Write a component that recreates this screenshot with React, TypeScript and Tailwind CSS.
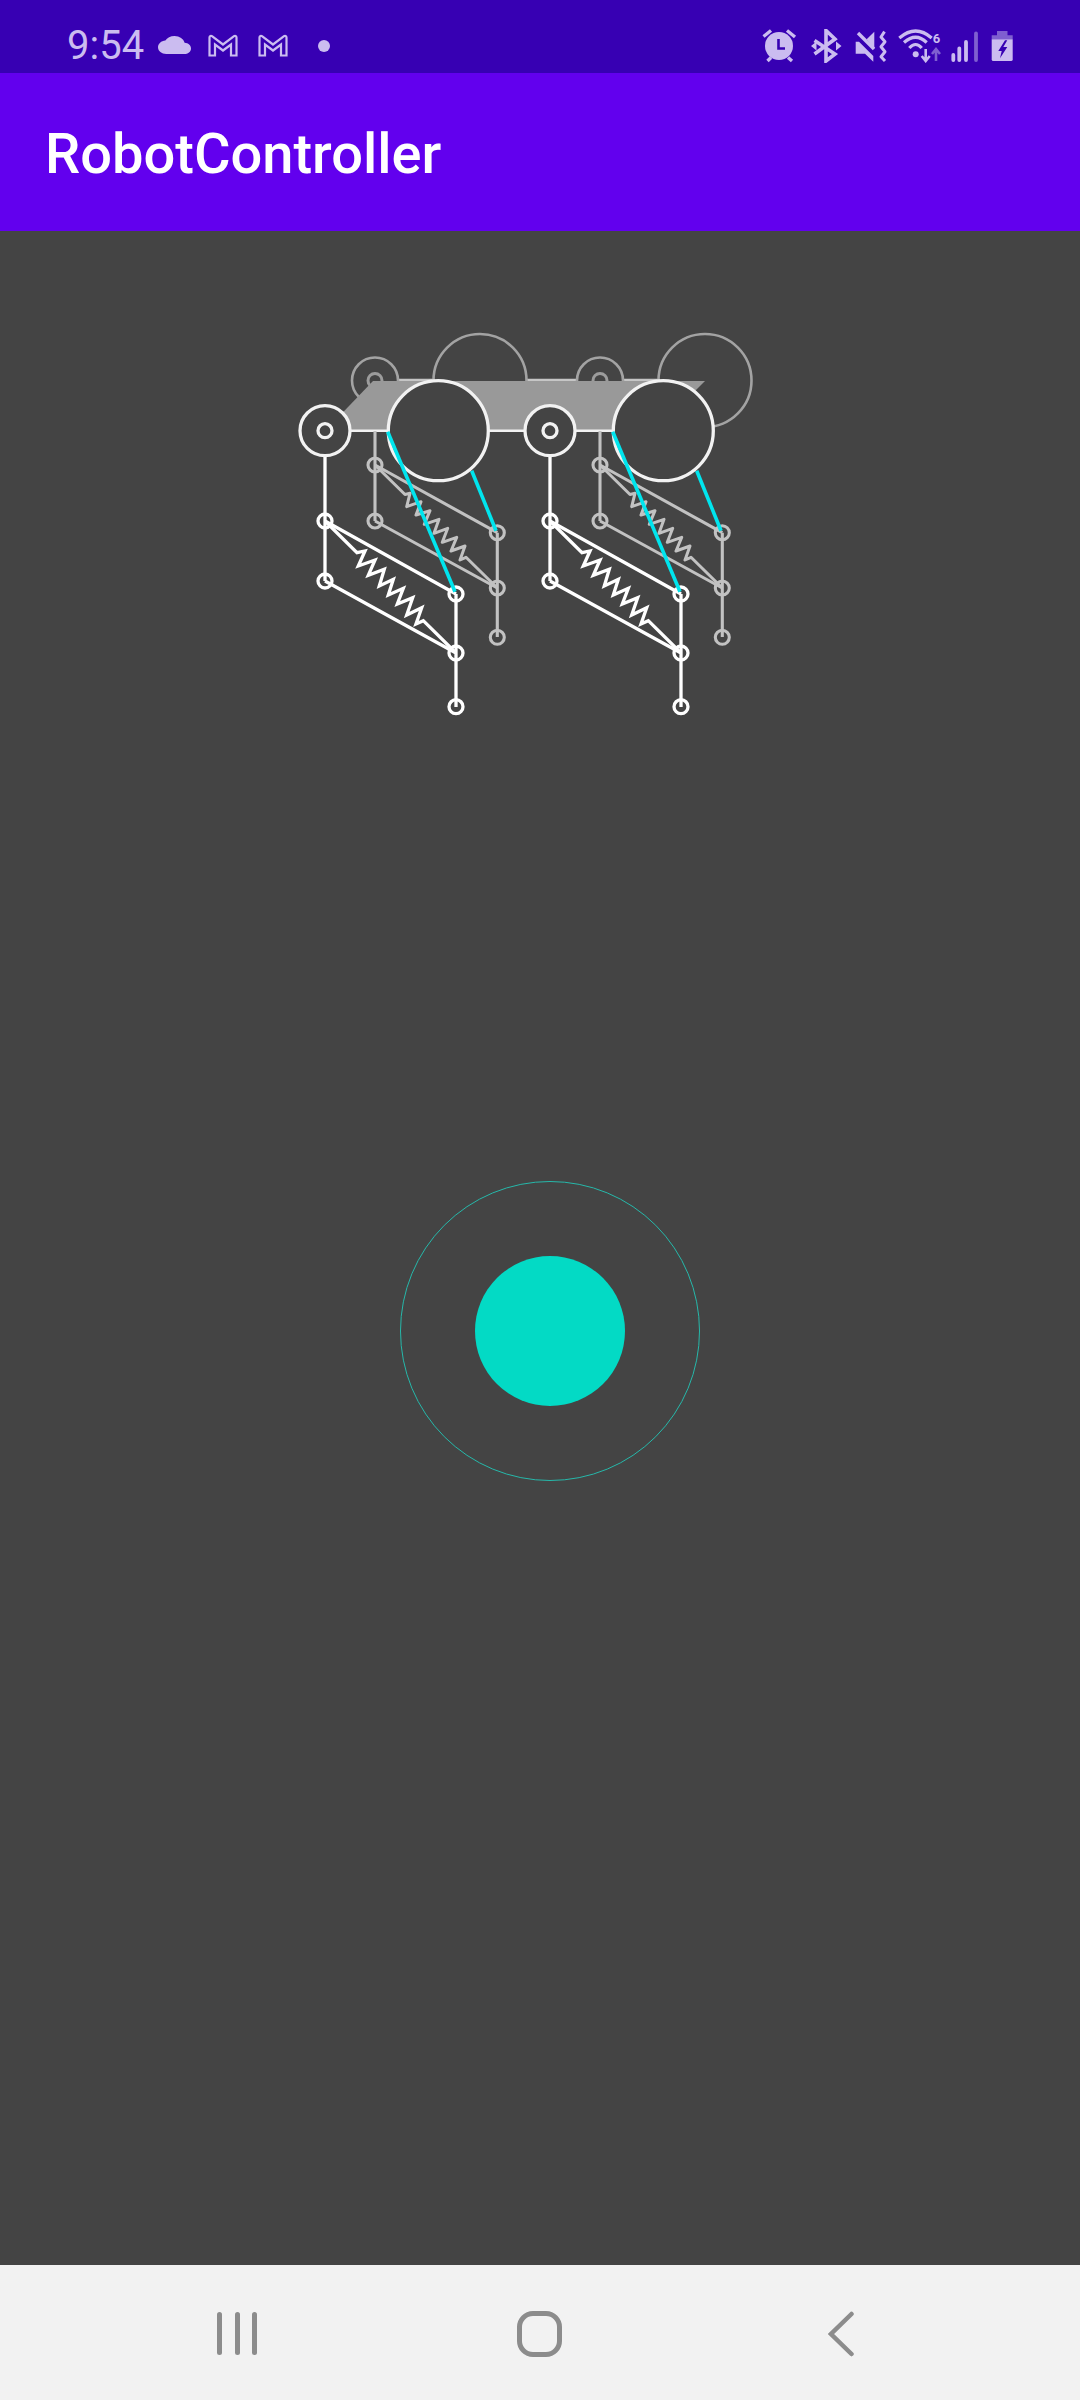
const backSpring = "375,465 405,494.5 410,493.3 406.7,506.7 421,501.7 416,515 430,510.7 424.3,524.3 439,519.3 434,533.3 447.7,528.3 442.3,542.3 456.7,537.3 451,551 465,546 460,560 466,557.3 497.3,588";
const frontSpring = "325,521 357,552.7 365,551 358.3,566 375,560 368.3,575.3 384.3,569.3 379.3,586 393.3,579.3 388.3,595 403.3,588.3 397.3,604 412.7,597.7 406.7,615 421.7,607.7 416,624 423.3,620.7 456,653";

const BackWheels = () => (
  <g fill="#444444" stroke="#a3a3a3" strokeWidth="2.6">
    <circle cx="375" cy="380.5" r="23" />
    <circle cx="375" cy="380.5" r="7" strokeWidth="3" stroke="#9c9c9c" />
    <circle cx="480" cy="380.5" r="46.5" />
  </g>
);

const BackLeg = () => (
  <g fill="none" stroke="#c2c2c2" strokeWidth="3.1">
    <path d="M375 431V521M375 465L497.3 532.7M375 521L497.3 588M497.3 532.7V637" />
    <polyline points={backSpring} strokeWidth="3" strokeLinejoin="round" />
    <circle cx="375" cy="465" r="7" />
    <circle cx="375" cy="521" r="7" />
    <circle cx="497.3" cy="532.7" r="7" />
    <circle cx="497.3" cy="588" r="7" />
    <circle cx="497.3" cy="637.3" r="7" />
    <path d="M471.7 470.7L496 530.7" stroke="#00e5ee" strokeWidth="3.6" />
  </g>
);

const FrontLeg = () => (
  <g fill="none" stroke="#ffffff" strokeWidth="3.3">
    <path d="M325 455V581M325 521L456 594M325 581L456 653M456 594V707" />
    <polyline points={frontSpring} strokeLinejoin="miter" />
    <circle cx="325" cy="430.7" r="25" fill="#444444" stroke="#f2f2f2" />
    <circle cx="325" cy="430.7" r="7" stroke="#f2f2f2" />
    <circle cx="325" cy="521" r="7" />
    <circle cx="325" cy="581" r="7" />
    <circle cx="456" cy="594" r="7" />
    <circle cx="456" cy="653" r="7" />
    <circle cx="456" cy="706.7" r="7" />
    <circle cx="438.3" cy="430.7" r="50" fill="#444444" stroke="#f2f2f2" />
    <path d="M387.7 431.7L455 591.7" stroke="#00e5ee" strokeWidth="3.6" />
  </g>
);

const Robot = () => (
  <svg width="1080" height="500" viewBox="0 231 1080 500" className="block">
    <path d="M375 380H672" stroke="#c6c6c6" strokeWidth="2.4" />
    <BackWheels />
    <g transform="translate(225 0)">
      <BackWheels />
    </g>
    <path d="M373 381H705L655 431H325Z" fill="#999999" />
    <path d="M325 430.7H663" stroke="#f2f2f2" strokeWidth="2.4" />
    <BackLeg />
    <g transform="translate(225 0)">
      <BackLeg />
    </g>
    <FrontLeg />
    <g transform="translate(225 0)">
      <FrontLeg />
    </g>
  </svg>
);

const lavender = "#cbbcf0";
const dim = "#7f5fd0";
const bar = "#3700b3";

const MailIcon = ({ className }: { className?: string }) => (
  <svg width="30" height="23" viewBox="0 0 30 23" className={className} fill="none" stroke={lavender} strokeWidth="2.2">
    <path d="M1.5 21.5V3.5C1.5 2 3 1.5 4 2.2L15 10.5 26 2.2C27 1.5 28.5 2 28.5 3.5V21.5H23V10.5L15 16.5 7 10.5V21.5Z" />
  </svg>
);

const StatusBar = () => (
  <div className="h-[73px] pt-[18px] bg-[#3700b3] flex items-center pl-[67px] pr-[66px] shrink-0">
    <span className="font-['Roboto',sans-serif] text-[40px] leading-none text-[#cbbcf0] w-[91px] mt-[1px]">9:54</span>
    <svg width="33" height="18" viewBox="0 4 24 16" preserveAspectRatio="none" fill={lavender} className="mt-[-1px]">
      <path d="M19.35 10.04C18.67 6.59 15.64 4 12 4 9.11 4 6.6 5.64 5.35 8.04 2.34 8.36 0 10.91 0 14c0 3.31 2.69 6 6 6h13c2.76 0 5-2.24 5-5 0-2.64-2.05-4.78-4.65-4.96z" />
    </svg>
    <MailIcon className="ml-[17px]" />
    <MailIcon className="ml-[20px]" />
    <div className="w-3 h-3 rounded-full bg-[#cbbcf0] ml-[30px]" />
    <div className="flex-1" />
    {/* alarm */}
    <svg width="35" height="34" viewBox="762 28 35 34">
      <circle cx="779" cy="45" r="14" fill={lavender} />
      <path d="M763.5 35.5L771 29.5M787 29.5L795 36M767.5 60L771 56.5M788 56.5L792 60" stroke={lavender} strokeWidth="3.4" fill="none" />
      <path d="M778.5 38V47.5H785" stroke={bar} strokeWidth="2.6" fill="none" />
    </svg>
    {/* bluetooth */}
    <svg width="31" height="34" viewBox="811 28 31 34" className="ml-[14px]">
      <path d="M814.5 39.5L835 53L826 60V29.5L835 38L814.5 53" stroke={lavender} strokeWidth="3.6" fill="none" />
      <path d="M811 45L816.5 40.5V49.5ZM841.5 45L836 40.5V49.5Z" fill={lavender} />
    </svg>
    {/* muted, vibrate */}
    <svg width="34" height="34" viewBox="854 28 34 34" className="ml-[12px]">
      <path d="M855.7 40.7H859L873.3 55V60.7L865 52.7H855.7ZM866.7 38.3L874.3 30.7V48.3Z" fill={lavender} />
      <path d="M858 32L874 48" stroke={lavender} strokeWidth="3.4" />
      <path d="M884.5 30.7L881 36L885 40.7L881 45.7L885 50.7L881 55.7L885 60" stroke={lavender} strokeWidth="3" fill="none" strokeLinejoin="round" />
    </svg>
    {/* wifi */}
    <svg width="44" height="34" viewBox="897 28 44 34" className="ml-[9px]">
      <path d="M899.3 37Q915.7 23 931.7 37M904 41.5Q915.7 31 926.7 41.5M909.3 47Q915.7 40 921.7 47" stroke={lavender} strokeWidth="3.2" fill="none" />
      <circle cx="915.7" cy="53.3" r="3" fill={lavender} />
      <path d="M925.7 48V59M921.7 55L925.7 60L929.7 55" stroke={lavender} strokeWidth="2.6" fill="none" />
      <path d="M936 60V49M932 53L936 48L940 53" stroke={dim} strokeWidth="2.6" fill="none" />
      <text x="936.5" y="42" fontSize="13" fontWeight="700" textAnchor="middle" fill={lavender} fontFamily="Roboto, sans-serif">6</text>
    </svg>
    {/* signal */}
    <svg width="29" height="34" viewBox="950 28 29 34" className="ml-[9px]">
      <path d="M953.3 54V59M959.3 47.5V59M966 41V59" stroke={lavender} strokeWidth="3.8" strokeLinecap="round" />
      <path d="M976 32.5V59" stroke={dim} strokeWidth="3.8" strokeLinecap="round" />
    </svg>
    {/* battery charging */}
    <svg width="23" height="34" viewBox="991 28 23 34" className="ml-[12px]">
      <path d="M997 30H1007.5V34.3H1012.7V38.3H991.7V34.3H997Z" fill={dim} />
      <path d="M991.7 38.3H1012.7V58.5Q1012.7 60 1011 60H993.4Q991.7 60 991.7 58.5Z" fill={lavender} />
      <path d="M1005 39.3L998.3 50H1001.7L1000 57.3L1007.3 46H1003.3L1007.3 39.3Z" fill={bar} />
    </svg>
  </div>
);

const Joystick = () => (
  <div className="ml-[400px] mt-[450px] w-[300px] h-[300px] rounded-full border border-[#26b8aa] flex items-center justify-center">
    <div className="w-[150px] h-[150px] rounded-full bg-[#03dac5]" />
  </div>
);

const NavBar = () => (
  <div className="h-[135px] pt-[2px] bg-[#f2f2f2] flex items-center pl-[217px] shrink-0">
    <div className="flex gap-[12.5px]">
      <div className="w-[5px] h-[43px] rounded-full bg-[#8c8c8c]" />
      <div className="w-[5px] h-[43px] rounded-full bg-[#8c8c8c]" />
      <div className="w-[5px] h-[43px] rounded-full bg-[#8c8c8c]" />
    </div>
    <div className="ml-[260px] w-[45px] h-[46px] rounded-[16px] border-[5px] border-[#8c8c8c]" />
    <svg width="26" height="46" viewBox="0 0 26 46" fill="none" className="ml-[266px]">
      <path d="M23.5 3L3 23L23.5 43" stroke="#8c8c8c" strokeWidth="4.5" strokeLinecap="round" strokeLinejoin="miter" />
    </svg>
  </div>
);

export default function App() {
  return (
    <div className="w-[1080px] h-[2400px] flex flex-col bg-[#444444] overflow-hidden">
      <StatusBar />
      <div className="h-[158px] pt-[3px] bg-[#6200ee] flex items-center pl-[45px] shrink-0">
        <h1 className="font-['Roboto',sans-serif] font-medium text-[56px] leading-none text-white">RobotController</h1>
      </div>
      <main className="flex-1">
        <Robot />
        <Joystick />
      </main>
      <NavBar />
    </div>
  );
}
